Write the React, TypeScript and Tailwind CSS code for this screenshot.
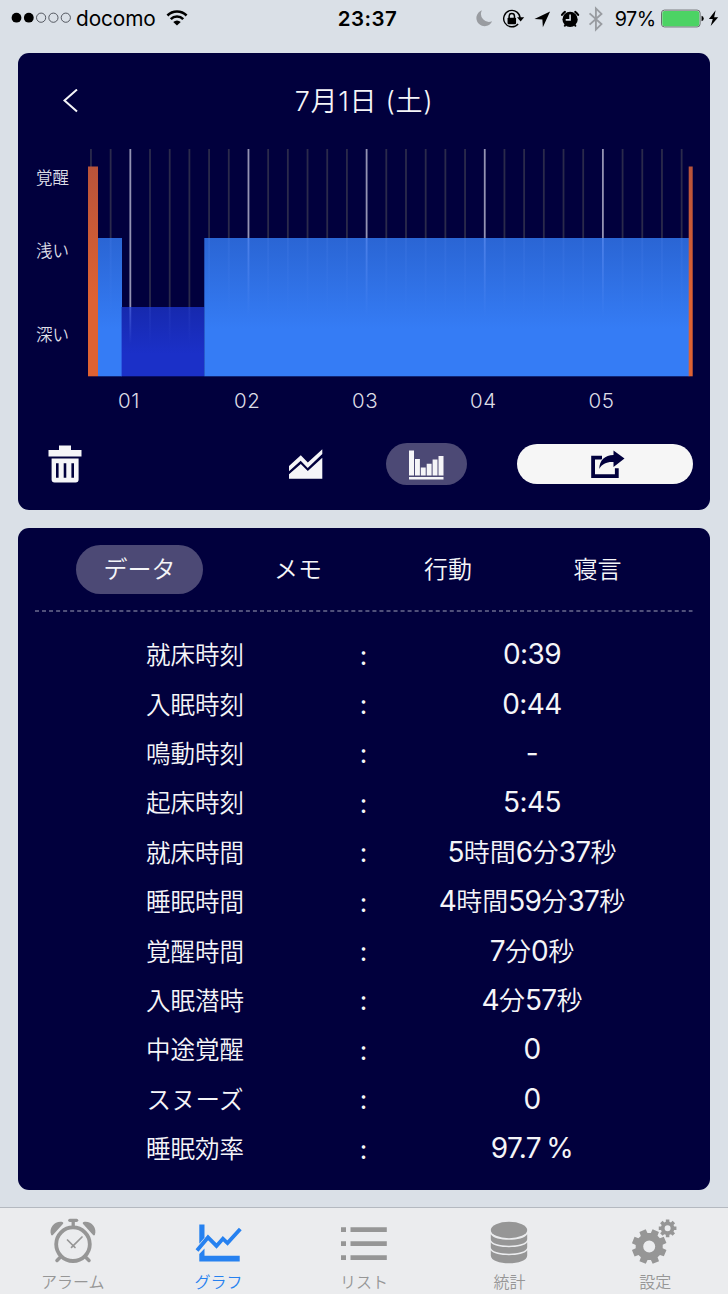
import React from 'react';

const LABEL_FONT = "font-['Inter','Noto_Sans_CJK_JP',sans-serif]";

const ROWS = [
    { label: '就床時刻', value: '0:39' },
    { label: '入眠時刻', value: '0:44' },
    { label: '鳴動時刻', value: '-' },
    { label: '起床時刻', value: '5:45' },
    { label: '就床時間', value: '5時間6分37秒' },
    { label: '睡眠時間', value: '4時間59分37秒' },
    { label: '覚醒時間', value: '7分0秒' },
    { label: '入眠潜時', value: '4分57秒' },
    { label: '中途覚醒', value: '0' },
    { label: 'スヌーズ', value: '0' },
    { label: '睡眠効率', value: '97.7 %' },
];

// Outline of a cog with trapezoid teeth
const gearPath = (cx: number, cy: number, outer: number, inner: number, hole: number, teeth: number, start: number) => {
    const step = (Math.PI * 2) / teeth;
    const points: string[] = [];
    for (let i = 0; i < teeth; i++) {
        const a = start + i * step;
        [
            [inner, -0.34],
            [outer, -0.25],
            [outer, 0.25],
            [inner, 0.34],
        ].forEach(([r, o]) => {
            points.push(`${(cx + r * Math.cos(a + o * step)).toFixed(2)} ${(cy + r * Math.sin(a + o * step)).toFixed(2)}`);
        });
    }
    return `M${points.join('L')}ZM${cx - hole} ${cy}a${hole} ${hole} 0 1 0 ${hole * 2} 0a${hole} ${hole} 0 1 0 ${-hole * 2} 0Z`;
};

const StatusBar: React.FC = () => {
    return (
        <div className="flex h-[37px] shrink-0 items-center justify-between pl-[11px] pr-[8px] text-black">
            <div className="flex w-[240px] items-center">
                <svg className="h-3 w-[61px]" viewBox="0 0 61 12">
                    <circle cx="5.5" cy="5.7" r="4.9" />
                    <circle cx="17.8" cy="5.7" r="4.9" />
                    {[30.1, 42.4, 54.8].map((x) => (
                        <circle key={x} cx={x} cy="5.7" r="4.6" fill="none" stroke="#333740" strokeWidth="0.8" />
                    ))}
                </svg>
                <span className="ml-1 mt-px text-[20.8px] leading-none tracking-[-0.1px]">docomo</span>
                <svg className="ml-[10px] h-4 w-[22px]" viewBox="0 0 23 16" fill="none" stroke="#000" strokeWidth="2.7">
                    <path d="M1.5 5.4a14.2 14.2 0 0 1 20 0" />
                    <path d="M5 9.2a9 9 0 0 1 13 0" />
                    <path d="M11.5 15.8l-3.9-3.7a5.6 5.6 0 0 1 7.8 0z" fill="#000" stroke="none" />
                </svg>
            </div>
            <span className="ml-[9px] mt-px text-[20.5px] font-semibold leading-none tracking-[0.5px]">23:37</span>
            <div className="flex w-[245px] items-center justify-end">
                <svg className="h-[30px] w-[130px]" viewBox="0 0 130 30">
                    <path d="M8 9.6a8.3 8.3 0 1 0 10.3 11.2A8.1 8.1 0 0 1 8 9.6z" fill="#999ca1" transform="translate(-1 -3.5)" />
                    <g transform="translate(-1.7 -3.2)">
                        {/* rotation lock */}
                        <path d="M46.9 23.2a8.3 8.3 0 1 1 2-5.2" fill="none" stroke="#000" strokeWidth="1.4" transform="translate(-1.6 0)" />
                        <path d="M44.2 16.5h7.2l-3.6 4.2z" />
                        <rect x="34.6" y="17" width="8.6" height="6.4" rx="0.8" />
                        <path d="M36.2 17.4v-2a2.7 2.7 0 0 1 5.4 0v2" fill="none" stroke="#000" strokeWidth="1.5" />
                        <path d="M78.6 10.2L62.8 17.6l8 .5.5 8z" transform="translate(-1 .5)" />
                        {/* alarm */}
                        <g transform="translate(-.2 0)">
                            <circle cx="98" cy="18.6" r="7.7" />
                            <path d="M92.8 11a14 14 0 0 0-3 3M103.2 11a14 14 0 0 1 3 3" stroke="#000" strokeWidth="2.1" strokeLinecap="round" />
                            <path d="M93.4 24l-1.2 1.8M102.6 24l1.2 1.8" stroke="#000" strokeWidth="1.8" />
                            <path d="M98 13.6v5.5h-4.4" fill="none" stroke="#dae0e7" strokeWidth="1.6" />
                        </g>
                        <path d="M117.5 13l12 10.8-5.6 5.6V8l5.6 5.5-12 10.9" fill="none" stroke="#999ca1" strokeWidth="1.9" transform="translate(0 -.5)" />
                    </g>
                </svg>
                <span className="ml-[11px] mt-[3px] text-[19.8px] leading-none tracking-[-0.5px]">97%</span>
                <svg className="ml-[5px] h-5 w-[60px]" viewBox="0 0 60 20">
                    <rect x="0.5" y="1" width="39" height="17" rx="3" fill="#e8eef0" stroke="#666a6c" strokeWidth="1" />
                    <rect x="1.3" y="1.8" width="37.4" height="15.4" rx="2.2" fill="#4cd364" />
                    <path d="M41 6.7q2.2.5 2.2 2.8t-2.2 2.8z" />
                    <path d="M55.2 1.2l-6.8 8.8h3.9L50.2 17l7.6-8.8h-4.1z" />
                </svg>
            </div>
        </div>
    );
};

const SleepChart: React.FC = () => {
    return (
        <svg className="h-[228px] w-[605px]" viewBox="0 0 605 228">
            <defs>
                <linearGradient id="light" gradientUnits="userSpaceOnUse" x1="0" y1="17" x2="0" y2="180">
                    <stop offset="0" stopColor="#2657bd" />
                    <stop offset="0.44" stopColor="#2a65d4" />
                    <stop offset="1" stopColor="#357cf5" />
                </linearGradient>
                <linearGradient id="deep" gradientUnits="userSpaceOnUse" x1="0" y1="158" x2="0" y2="205">
                    <stop offset="0" stopColor="#1629ae" />
                    <stop offset="1" stopColor="#1b30c8" />
                </linearGradient>
                <linearGradient id="awake" gradientUnits="userSpaceOnUse" x1="0" y1="17" x2="0" y2="150">
                    <stop offset="0" stopColor="#b8533a" />
                    <stop offset="1" stopColor="#de6233" />
                </linearGradient>
                <linearGradient id="fade" gradientUnits="userSpaceOnUse" x1="0" y1="89" x2="0" y2="168">
                    <stop offset="0" stopColor="#6f9cff" stopOpacity="0.55" />
                    <stop offset="1" stopColor="#6f9cff" stopOpacity="0" />
                </linearGradient>
                <linearGradient id="fadeDeep" gradientUnits="userSpaceOnUse" x1="0" y1="158" x2="0" y2="195">
                    <stop offset="0" stopColor="#6f8cff" stopOpacity="0.5" />
                    <stop offset="1" stopColor="#6f8cff" stopOpacity="0" />
                </linearGradient>
            </defs>
            {Array.from({ length: 31 }, (_, i) => (
                <rect key={i} x={2.05 + i * 19.69} y="0" width="1.8" height="200" fill={i % 6 === 2 ? '#9493b3' : '#2b2a4b'} />
            ))}
            <rect x="10" y="89" width="24" height="138.3" fill="url(#light)" />
            <rect x="33.6" y="158" width="82.7" height="69.3" fill="url(#deep)" />
            <rect x="116.3" y="89" width="485" height="138.3" fill="url(#light)" />
            {Array.from({ length: 31 }, (_, i) => {
                const x = 2.05 + i * 19.69;
                const isDeep = x > 34 && x < 116;
                return (
                    <rect
                        key={i}
                        x={x}
                        y={isDeep ? 158 : 89}
                        width="1.8"
                        height={isDeep ? 37 : 79}
                        fill={isDeep ? 'url(#fadeDeep)' : 'url(#fade)'}
                        opacity={i % 6 === 2 ? 0.9 : 0.22}
                    />
                );
            })}
            <rect x="0" y="17.5" width="10" height="209.8" fill="url(#awake)" />
            <rect x="600.7" y="17.5" width="4" height="209.8" fill="url(#awake)" />
        </svg>
    );
};

const GraphCard: React.FC = () => {
    return (
        <section className="mx-[18px] mt-4 flex h-[457px] shrink-0 flex-col rounded-[11px] bg-[#01003d] text-[#f5f5f8]">
            <div className="flex h-24 items-center pl-[43px]">
                <svg className="h-6 w-5" viewBox="0 0 20 24" fill="none" stroke="#f5f5f8" strokeWidth="2">
                    <path d="M16 .5L3.5 11.5l12.5 11" />
                </svg>
                <h1 className="ml-[-63px] mt-[2px] flex-1 text-center text-[27px] font-[350] tracking-[0.7px]">7月1日 (土)</h1>
            </div>
            <div className="flex">
                <div className="flex w-[70px] flex-col pl-[18px] pt-px text-[16.5px] font-[350] leading-6 text-[#dddde6]">
                    <span className="mt-4">覚醒</span>
                    <span className="mt-[49px]">浅い</span>
                    <span className="mt-[60px]">深い</span>
                </div>
                <SleepChart />
            </div>
            <div className="ml-[52px] mt-[8px] flex text-center text-[20.5px] font-[350] leading-8 tracking-[0.6px] text-[#dddde6]">
                {['01', '02', '03', '04', '05'].map((hour) => (
                    <span key={hour} className="w-[118.1px]">{hour}</span>
                ))}
            </div>
            <div className="mt-[26px] flex h-[42px] items-center">
                <svg className="ml-[30px] h-[38px] w-[34px]" viewBox="0 0 34 38" fill="#f5f5f8">
                    <path d="M11 .5h12V5h10.5v6.5H.5V5H11z" />
                    <path fillRule="evenodd" d="M3.6 13.6h27v21a3 3 0 0 1-3 3H6.6a3 3 0 0 1-3-3zM8 18.3v14.5h2.6V18.3zM15.7 18.3v14.5h2.6V18.3zM23.4 18.3v14.5H26V18.3z" />
                </svg>
                <svg className="ml-[207px] h-[30px] w-[34px]" viewBox="0 0 34 30" fill="#f5f5f8">
                    <path d="M0 17L11.8 6.3l7 7.2L33.3.3V5L18.7 19l-7-7.2L0 22.2z" />
                    <path d="M0 25.3L11.8 15l7 7L33.3 8.7v21H0z" />
                </svg>
                <div className="ml-[63px] flex h-[42px] w-[81px] items-center justify-center rounded-full bg-[#4c4975]">
                    <svg className="mt-[2px] h-[30px] w-[35px]" viewBox="0 0 35 30" fill="#f5f5f8">
                        <path d="M0 .6h5v25H0zM6 9h4.9v16.6H6zM11.8 17.5h4.9v8.1h-4.9zM17.7 13.7h4.9v11.9h-4.9zM23.6 9.6h4.9v16h-4.9zM29.5 6h5v19.6h-5zM0 27h34.5v2.4H0z" />
                    </svg>
                </div>
                <div className="ml-[50px] flex h-10 w-[176px] items-center justify-center rounded-full bg-[#f6f6f6]">
                    <svg className="ml-[5px] h-[29px] w-[35px]" viewBox="0 0 35 29" fill="#01003d">
                        <path d="M12 7.6H3.1v18.6h23.7v-8" fill="none" stroke="#01003d" strokeWidth="3.8" />
                        <path d="M23.5 .4L34.5 8.6 23.5 17v-5c-6.5-.4-11.5 1.6-14.2 7C9.3 10.4 15 5 23.5 5z" stroke="#f6f6f6" strokeWidth="1.6" paintOrder="stroke" />
                    </svg>
                </div>
            </div>
        </section>
    );
};

interface ValueProps {
    value: string;
}

// Units are set a little smaller than the digits
const Value: React.FC<ValueProps> = ({ value }) => {
    return (
        <span className="mb-[3px] w-[200px] whitespace-nowrap text-[28px] font-normal leading-none tracking-[-0.6px] [word-spacing:-2px]">
            {value.split(/([時間分秒]+)/).map((part, i) =>
                i % 2 === 1 ? (
                    <span key={i} className="text-[26px] font-[350] tracking-normal">{part}</span>
                ) : (
                    part
                )
            )}
        </span>
    );
};

const DataCard: React.FC = () => {
    return (
        <section className="mx-[18px] mt-[17.5px] flex h-[662.5px] shrink-0 flex-col rounded-[11px] bg-[#01003d] px-[17px] pt-[17.5px] text-[#f5f5f8]">
            <div className="ml-[41px] flex items-center text-[24px] font-[350]">
                <span className="flex h-[49px] w-[127px] items-center justify-center rounded-full bg-[#4c4975]">データ</span>
                <span className="ml-5 w-[150px] text-center">メモ</span>
                <span className="w-[150px] text-center">行動</span>
                <span className="w-[149px] text-center">寝言</span>
            </div>
            <svg className="mt-4 h-[2px] w-[658px]" viewBox="0 0 658 2">
                <path d="M0 1h657.5" stroke="#a09fb8" strokeWidth="1.2" strokeDasharray="4 3.03" />
            </svg>
            <div className="mt-[19px] flex flex-col font-[350]">
                {ROWS.map((row) => (
                    <div key={row.label} className="ml-[60px] flex h-[49.4px] items-center text-center">
                        <span className="w-[200px] text-[24.5px]">{row.label}</span>
                        <span className="w-[137px] text-[26px] font-normal leading-none">:</span>
                        <Value value={row.value} />
                    </div>
                ))}
            </div>
        </section>
    );
};

interface TabProps {
    label: string;
    active?: boolean;
    children: React.ReactNode;
}

const Tab: React.FC<TabProps> = ({ label, active, children }) => {
    return (
        <div className={`flex flex-1 flex-col items-center pt-2 ${active ? 'text-[#2681f0]' : 'text-[#969696]'}`}>
            <svg className="h-[52px] w-[52px]" viewBox="0 0 52 52" fill="currentColor">
                {children}
            </svg>
            <span className="mt-[2px] text-[16px] font-[350] leading-6">{label}</span>
        </div>
    );
};

const TabBar: React.FC = () => {
    return (
        <nav className="mt-auto flex h-[87px] shrink-0 border-t border-[#b4b9c0] bg-[#ebecee]">
            <Tab label="アラーム">
                <circle cx="26" cy="28.2" r="16.8" fill="none" stroke="currentColor" strokeWidth="3.8" />
                <g fill="none" stroke="currentColor" strokeLinecap="round">
                    <path d="M22.8 4.3h6.8" strokeWidth="3.3" />
                    <path d="M26.2 4.3v7" strokeWidth="3.3" strokeLinecap="butt" />
                    <path d="M14 40.5l-4 4M38 40.5l4 4" strokeWidth="3.5" />
                    <path d="M20.5 24l7.5 7.5M35 21L24.5 31.3" strokeWidth="1.7" />
                </g>
                <path d="M4.2 19C1.2 11 9 4.2 15.5 6q1.2.6.6 1.7L5.9 19.1q-1 .6-1.7-.1zM47.8 19C50.8 11 43 4.2 36.5 6q-1.2.6-.6 1.7l10.2 11.4q1 .6 1.7-.1z" />
            </Tab>
            <Tab label="グラフ" active>
                <path d="M7.3 8.5h5.2v13.2l-5.2 6zM7.3 38l5.2-5.4v7.2h35.2v5.8H7.3z" />
                <path d="M5 34.4l11-13 8.5 8.5 6.4-7.2 4.6 4.4L48.3 13" fill="none" stroke="currentColor" strokeWidth="3.8" />
            </Tab>
            <Tab label="リスト">
                <path d="M3 11.2h5v4.7H3zM12.5 11.2h36.3v4.7H12.5zM3 25.2h5v4.7H3zM12.5 25.2h36.3v4.7H12.5zM3 39.3h5V44H3zM12.5 39.3h36.3V44H12.5z" />
            </Tab>
            <Tab label="統計">
                <g transform="translate(-.8 0)">
                    <ellipse cx="25.8" cy="14" rx="18.2" ry="8.2" />
                    <path d="M7.6 18.2c4 7.4 32.4 7.4 36.4 0v5c0 8.6-36.4 8.6-36.4 0z" />
                    <path d="M7.6 26.2c4 6.6 32.4 6.6 36.4 0v5c0 8.6-36.4 8.6-36.4 0z" />
                    <path d="M7.6 34.2c4 6.6 32.4 6.6 36.4 0v5.2c0 10.4-36.4 10.4-36.4 0z" />
                </g>
            </Tab>
            <Tab label="設定">
                <path fillRule="evenodd" d={gearPath(20.2, 30.6, 17.6, 13.6, 6, 8, 0.39)} />
                <path fillRule="evenodd" d={gearPath(38.6, 12.3, 9, 6.8, 3, 8, 0)} />
            </Tab>
        </nav>
    );
};

const App: React.FC = () => {
    return (
        <div className={`flex h-[1294px] w-[728px] flex-col overflow-hidden bg-[#dae0e7] ${LABEL_FONT}`}>
            <StatusBar />
            <GraphCard />
            <DataCard />
            <TabBar />
        </div>
    );
};

export default App;
